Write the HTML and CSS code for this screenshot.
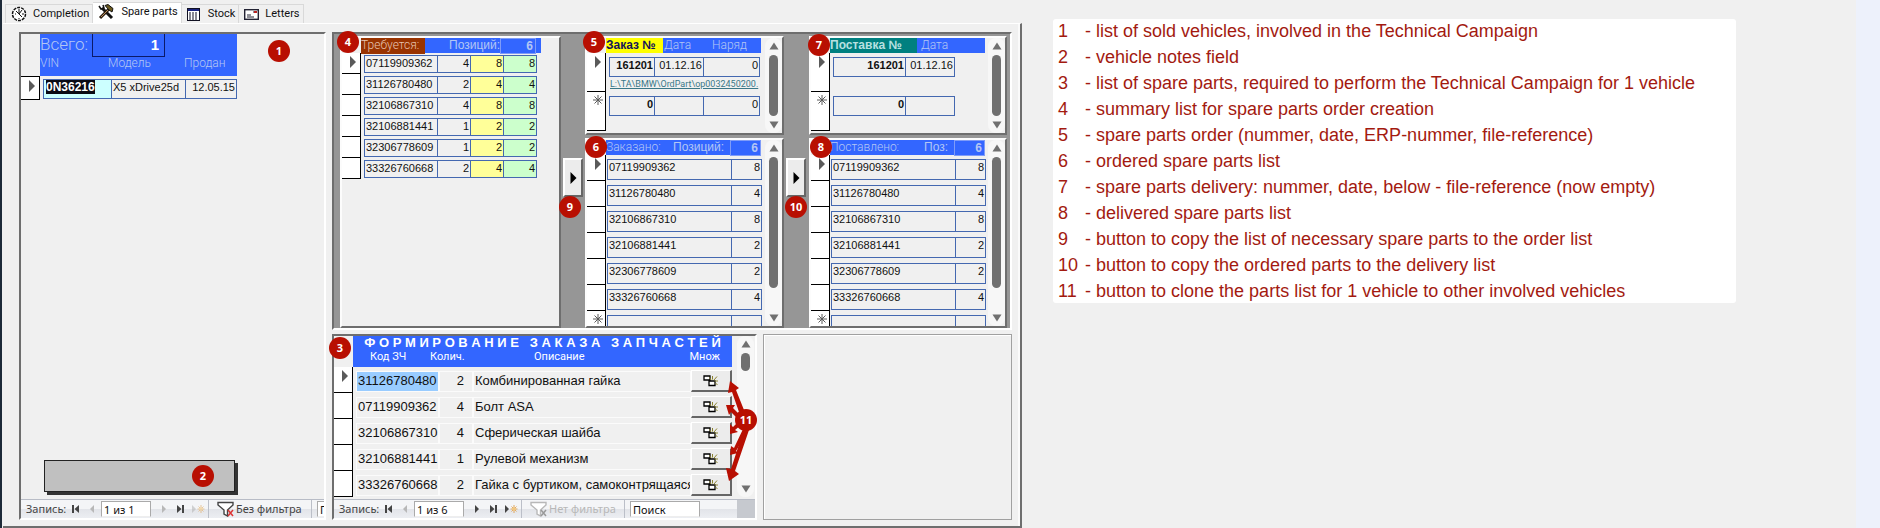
FILE: index.html
```html
<!DOCTYPE html>
<html lang="ru">
<head>
<meta charset="utf-8">
<title>Spare parts</title>
<link rel="stylesheet" href="styles.css">
</head>
<body>
<svg class="defs" aria-hidden="true">
  <symbol id="tri" viewBox="0 0 6 12"><path d="M0 0L6 6L0 12Z" fill="currentColor"/></symbol>
  <symbol id="star" viewBox="0 0 10 10"><path d="M5 0V10M0 5H10M1.500 1.500L8.500 8.500M8.500 1.500L1.500 8.500" stroke="currentColor" fill="none"/></symbol>
  <symbol id="up" viewBox="0 0 10 8"><path d="M5 0.500L9.500 7.500H0.500Z" fill="#707070"/></symbol>
  <symbol id="down" viewBox="0 0 10 8"><path d="M0.500 0.500H9.500L5 7.500Z" fill="#707070"/></symbol>
  <symbol id="first" viewBox="0 0 8 8"><path d="M0 0H2V8H0ZM7 0V8L2.500 4Z" fill="currentColor"/></symbol>
  <symbol id="last" viewBox="0 0 8 8"><path d="M6 0H8V8H6ZM1 0V8L5.500 4Z" fill="currentColor"/></symbol>
  <symbol id="prev" viewBox="0 0 8 8"><path d="M6 0V8L2 4Z" fill="currentColor"/></symbol>
  <symbol id="next" viewBox="0 0 8 8"><path d="M2 0V8L6 4Z" fill="currentColor"/></symbol>
  <symbol id="new" viewBox="0 0 13 8"><path d="M0 0V8L4 4Z" fill="currentColor"/><path d="M9 0V8M5.500 4H12.500M6.500 1.500L11.500 6.500M11.500 1.500L6.500 6.500" stroke="#e0a860"/><circle cx="9" cy="4" r="1.800" fill="#f3c77c"/></symbol>
  <symbol id="funnel" viewBox="0 0 18 16"><path d="M1 1.500H16V4L10.500 9V15L7 13V9L1 4Z" fill="#fff" stroke="currentColor" stroke-width="1.400"/></symbol>
  <symbol id="clone" viewBox="0 0 16 12"><path d="M1 1H7V5H1ZM6 6H12V10.500H6Z" fill="#fff" stroke="#000" stroke-width="1.300"/><path d="M8 5L6.500 2.500M9.500 4.500V1M11 5L14 1.500M11.500 6H15M12.500 8L14.500 10" stroke="#8c8430" fill="none"/></symbol>
</svg>

<main class="window">
  <nav class="tabs">
    <button class="tab" type="button"><svg width="16" height="16" viewBox="0 0 16 16"><circle cx="8" cy="8" r="6.500" fill="#fff" stroke="#111" stroke-width="1.500" stroke-dasharray="3 1"/><path d="M8 3V8L5 5M8 8L11 11M11 4L8 8M4 8H5M11 8H13M8 12V13" stroke="#111" fill="none"/></svg>Completion</button>
    <button class="tab tab-on" type="button"><svg width="17" height="16" viewBox="0 0 17 16"><path d="M4 4L14 14" stroke="#111" stroke-width="3"/><path d="M1 2L3 5L6 4L5 1" stroke="#111" fill="none" stroke-width="1.500"/><path d="M2 14L11 5" stroke="#2b1d10" stroke-width="3"/><path d="M3 13L11 5" stroke="#b58a5a"/><path d="M7 1.500L10 0.500L15 4.500L14 8L11 6Z" fill="#6b5a20" stroke="#111"/></svg>Spare parts</button>
    <button class="tab" type="button"><svg width="13" height="13" viewBox="0 0 13 13"><rect x="0.500" y="0.500" width="12" height="12" fill="#fff" stroke="#112"/><path d="M1 2H12" stroke="#1a237e" stroke-width="2"/><path d="M2 5H11M2 7H11M2 9H11M2 11H11" stroke="#112" stroke-dasharray="2 1"/></svg>Stock</button>
    <button class="tab" type="button"><svg width="15" height="11" viewBox="0 0 15 11"><rect x="0.700" y="0.700" width="13.600" height="9.600" fill="#fff" stroke="#223" stroke-width="1.400"/><path d="M9 3H12M3 6H7M3 8H10" stroke="#223"/><path d="M10 3H13" stroke="#b22" stroke-width="2"/></svg>Letters</button>
  </nav>

  <div class="page">
    <section class="vehicles sunken">
      <span class="badge b1">1</span>
      <table class="grid-veh">
        <thead>
          <tr class="veh-total"><th colspan="3">Всего: <output class="total">1</output></th></tr>
          <tr class="veh-cols"><th>VIN</th><th>Модель</th><th>Продан</th></tr>
        </thead>
        <tbody>
          <tr><th class="sel"><svg width="6" height="12"><use href="#tri"/></svg></th><td class="vin"><mark>0N36216</mark></td><td class="model">X5 xDrive25d</td><td class="num">12.05.15</td></tr>
        </tbody>
      </table>
      <div class="notes-wrap"><textarea class="notes" aria-label="Notes" readonly></textarea><span class="badge b2">2</span></div>
      <div class="recnav">
        <label class="rec-label" for="rec1">Запись:</label>
        <button type="button" aria-label="First"><svg width="8" height="8"><use href="#first"/></svg></button>
        <button type="button" aria-label="Previous" disabled><svg width="8" height="8"><use href="#prev"/></svg></button>
        <input class="rec-no" id="rec1" value="1 из 1">
        <button type="button" aria-label="Next" disabled><svg width="8" height="8"><use href="#next"/></svg></button>
        <button type="button" aria-label="Last"><svg width="8" height="8"><use href="#last"/></svg></button>
        <button class="new" type="button" aria-label="New" disabled><svg width="13" height="8"><use href="#new"/></svg></button>
        <button class="filter" type="button"><svg width="18" height="16"><use href="#funnel"/><path d="M11 9L16 15M16 9L11 15" stroke="#d33" stroke-width="1.500"/></svg>Без фильтра</button>
        <input class="search" aria-label="Search" value="Поиск">
      </div>
    </section>

    <div class="right">
      <section class="parts">
        <div class="raised required">
          <span class="badge b4">4</span>
          <div class="cap"><span class="brown">Требуется:</span><span class="cap-mid">Позиций:</span><output class="count">6</output></div>
          <table class="list req">
            <tr><th class="sel"><svg width="6" height="12"><use href="#tri"/></svg></th><td>07119909362</td><td>4</td><td class="yellow">8</td><td class="green">8</td></tr>
            <tr><th class="sel"></th><td>31126780480</td><td>2</td><td class="yellow">4</td><td class="green">4</td></tr>
            <tr><th class="sel"></th><td>32106867310</td><td>4</td><td class="yellow">8</td><td class="green">8</td></tr>
            <tr><th class="sel"></th><td>32106881441</td><td>1</td><td class="yellow">2</td><td class="green">2</td></tr>
            <tr><th class="sel"></th><td>32306778609</td><td>1</td><td class="yellow">2</td><td class="green">2</td></tr>
            <tr><th class="sel"></th><td>33326760668</td><td>2</td><td class="yellow">4</td><td class="green">4</td></tr>
          </table>
        </div>

        <div class="mover"><button type="button" aria-label="Copy to order"><svg width="7" height="12"><use href="#tri"/></svg></button><span class="badge b9">9</span></div>

        <div class="stack">
          <div class="raised with-scroll">
            <span class="badge b5">5</span>
            <div>
              <div class="cap cap-order"><span class="yellow-cap">Заказ №</span><span>Дата</span><span>Наряд</span></div>
              <table class="list order">
                <tr><th class="sel"><svg width="6" height="12"><use href="#tri"/></svg></th><td class="strong">161201</td><td>01.12.16</td><td>0</td><td class="file"><a href="#file">L:\TA\BMW\OrdPart\op0032450200.</a></td></tr>
                <tr><th class="sel"><svg width="10" height="10"><use href="#star"/></svg></th><td class="strong">0</td><td></td><td>0</td></tr>
              </table>
            </div>
            <div class="scroll"><svg width="10" height="8"><use href="#up"/></svg><i class="thumb"></i><svg width="10" height="8"><use href="#down"/></svg></div>
          </div>
          <div class="raised with-scroll">
            <span class="badge b6">6</span>
            <div>
              <div class="cap cap-list"><span>Заказано:</span><span class="cap-mid">Позиций:</span><output class="count">6</output></div>
              <table class="list items">
                <tr><th class="sel"><svg width="6" height="12"><use href="#tri"/></svg></th><td>07119909362</td><td>8</td></tr>
                <tr><th class="sel"></th><td>31126780480</td><td>4</td></tr>
                <tr><th class="sel"></th><td>32106867310</td><td>8</td></tr>
                <tr><th class="sel"></th><td>32106881441</td><td>2</td></tr>
                <tr><th class="sel"></th><td>32306778609</td><td>2</td></tr>
                <tr><th class="sel"></th><td>33326760668</td><td>4</td></tr>
                <tr class="cut"><th class="sel"><svg width="10" height="10"><use href="#star"/></svg></th><td></td><td></td></tr>
              </table>
            </div>
            <div class="scroll"><svg width="10" height="8"><use href="#up"/></svg><i class="thumb long"></i><svg width="10" height="8"><use href="#down"/></svg></div>
          </div>
        </div>

        <div class="mover"><button type="button" aria-label="Copy to delivery"><svg width="7" height="12"><use href="#tri"/></svg></button><span class="badge b10">10</span></div>

        <div class="stack">
          <div class="raised with-scroll">
            <span class="badge b7">7</span>
            <div>
              <div class="cap cap-delivery"><span class="teal">Поставка №</span><span>Дата</span></div>
              <table class="list delivery">
                <tr><th class="sel"><svg width="6" height="12"><use href="#tri"/></svg></th><td class="strong">161201</td><td>01.12.16</td></tr>
                <tr><th class="sel"><svg width="10" height="10"><use href="#star"/></svg></th><td class="strong">0</td><td></td></tr>
              </table>
            </div>
            <div class="scroll"><svg width="10" height="8"><use href="#up"/></svg><i class="thumb"></i><svg width="10" height="8"><use href="#down"/></svg></div>
          </div>
          <div class="raised with-scroll">
            <span class="badge b8">8</span>
            <div>
              <div class="cap cap-list"><span>Поставлено:</span><span class="cap-mid">Поз:</span><output class="count">6</output></div>
              <table class="list items">
                <tr><th class="sel"><svg width="6" height="12"><use href="#tri"/></svg></th><td>07119909362</td><td>8</td></tr>
                <tr><th class="sel"></th><td>31126780480</td><td>4</td></tr>
                <tr><th class="sel"></th><td>32106867310</td><td>8</td></tr>
                <tr><th class="sel"></th><td>32106881441</td><td>2</td></tr>
                <tr><th class="sel"></th><td>32306778609</td><td>2</td></tr>
                <tr><th class="sel"></th><td>33326760668</td><td>4</td></tr>
                <tr class="cut"><th class="sel"><svg width="10" height="10"><use href="#star"/></svg></th><td></td><td></td></tr>
              </table>
            </div>
            <div class="scroll"><svg width="10" height="8"><use href="#up"/></svg><i class="thumb long"></i><svg width="10" height="8"><use href="#down"/></svg></div>
          </div>
        </div>
      </section>

      <div class="bottom">
        <section class="builder sunken">
          <span class="badge b3">3</span>
          <div class="builder-main">
            <table class="build">
              <thead>
                <tr class="build-title"><th colspan="4">Ф О Р М И Р О В А Н И Е &nbsp; З А К А З А &nbsp; З А П Ч А С Т Е Й</th></tr>
                <tr class="build-cols"><th>Код ЗЧ</th><th>Колич.</th><th>Описание</th><th>Множ</th></tr>
              </thead>
              <tbody>
                <tr><th class="sel"><svg width="6" height="12"><use href="#tri"/></svg></th><td class="picked">31126780480</td><td class="qty">2</td><td>Комбинированная гайка</td><td class="act"><button type="button" aria-label="Clone"><svg width="16" height="12"><use href="#clone"/></svg></button></td></tr>
                <tr><th class="sel"></th><td>07119909362</td><td class="qty">4</td><td>Болт ASA</td><td class="act"><button type="button" aria-label="Clone"><svg width="16" height="12"><use href="#clone"/></svg></button></td></tr>
                <tr><th class="sel"></th><td>32106867310</td><td class="qty">4</td><td>Сферическая шайба</td><td class="act"><button type="button" aria-label="Clone"><svg width="16" height="12"><use href="#clone"/></svg></button></td></tr>
                <tr><th class="sel"></th><td>32106881441</td><td class="qty">1</td><td>Рулевой механизм</td><td class="act"><button type="button" aria-label="Clone"><svg width="16" height="12"><use href="#clone"/></svg></button></td></tr>
                <tr><th class="sel"></th><td>33326760668</td><td class="qty">2</td><td>Гайка с буртиком, самоконтрящаяся</td><td class="act"><button type="button" aria-label="Clone"><svg width="16" height="12"><use href="#clone"/></svg></button></td></tr>
              </tbody>
            </table>
            <div class="scroll"><svg width="10" height="8"><use href="#up"/></svg><i class="thumb short"></i><svg width="10" height="8"><use href="#down"/></svg></div>
          </div>
          <svg class="arrows" width="34" height="104" viewBox="0 0 34 104" aria-hidden="true"><g fill="#b80f02"><path d="M4 0L13 7L10 9L18 29L13 31L6 11L2 12Z"/><path d="M0 24L9 24L7 27L14 34L11 37L5 31L3 34Z"/><path d="M4 53L4 43L7 46L13 40L15 44L9 49L12 51Z"/><path d="M4 74L5 65L8 67L18 46L23 48L10 70L12 72Z"/><path d="M3 100L0 87L5 88L18 48L23 49L9 90L13 93Z"/></g></svg>
          <span class="badge b11">11</span>
          <div class="recnav">
            <label class="rec-label" for="rec2">Запись:</label>
            <button type="button" aria-label="First"><svg width="8" height="8"><use href="#first"/></svg></button>
            <button type="button" aria-label="Previous" disabled><svg width="8" height="8"><use href="#prev"/></svg></button>
            <input class="rec-no" id="rec2" value="1 из 6">
            <button type="button" aria-label="Next"><svg width="8" height="8"><use href="#next"/></svg></button>
            <button type="button" aria-label="Last"><svg width="8" height="8"><use href="#last"/></svg></button>
            <button class="new" type="button" aria-label="New"><svg width="13" height="8"><use href="#new"/></svg></button>
            <button class="filter off" type="button" disabled><svg width="18" height="16"><use href="#funnel"/><path d="M11 9L16 15M16 9L11 15" stroke="#999" stroke-width="1.500"/></svg>Нет фильтра</button>
            <input class="search" aria-label="Search" value="Поиск">
            <i class="corner"></i>
          </div>
        </section>
        <section class="empty"></section>
      </div>
    </div>
  </div>
</main>

<aside class="side">
  <ul class="legend">
    <li><span>1</span>- list of sold vehicles, involved in the Technical Campaign</li>
    <li><span>2</span>- vehicle notes field</li>
    <li><span>3</span>- list of spare parts, required to perform the Technical Campaign for 1 vehicle</li>
    <li><span>4</span>- summary list for spare parts order creation</li>
    <li><span>5</span>- spare parts order (nummer, date, ERP-nummer, file-reference)</li>
    <li><span>6</span>- ordered spare parts list</li>
    <li><span>7</span>- spare parts delivery: nummer, date, below - file-reference (now empty)</li>
    <li><span>8</span>- delivered spare parts list</li>
    <li><span>9</span>- button to copy the list of necessary spare parts to the order list</li>
    <li><span>10</span>- button to copy the ordered parts to the delivery list</li>
    <li><span>11</span>- button to clone the parts list for 1 vehicle to other involved vehicles</li>
  </ul>
</aside>
<div class="strip"></div>
</body>
</html>
```
FILE: styles.css
```css
* { box-sizing: border-box; }

:root {
  --face: #f0f0f0;
  --blue: #3366ff;
  --pale: #b4c6f4;
  --line: #4468b0;
  --dark: #6e6e6e;
  --red: #b80f02;
  --ui: Roboto, sans-serif;
}

body {
  margin: 0;
  min-height: 100vh;
  display: grid;
  grid-template-columns: minmax(0, 1022fr) minmax(0, 834fr) 24px;
  background: var(--face);
  font: 11px/14px "Liberation Sans", sans-serif;
  color: #111;
}

button, input, textarea { font: inherit; color: inherit; }
button { padding: 0; border: 0; background: none; }
svg { display: block; flex: none; }
.defs { position: absolute; width: 0; height: 0; }
.strip { background: #edf1fb; }

/* window and tabs */
.window {
  display: flex;
  flex-direction: column;
  margin-bottom: 2px;
  padding-left: 1px;
  border-left: 2px solid #1d2a38;
}
.tabs { display: flex; align-items: flex-end; height: 23px; padding-left: 2px; }
.tab {
  display: flex;
  align-items: center;
  gap: 6px;
  height: 19px;
  padding: 0 3px 0 5px;
  border: 1px solid #d9d9d9;
  border-bottom: 0;
  border-left-width: 0;
  font: 11px/16px var(--ui);
}
.tab:nth-child(3) { gap: 8px; }
.tab:first-child { border-left-width: 1px; }
.tab-on { height: 21px; padding-bottom: 3px; background: #fff; }

.page {
  flex: 1;
  display: grid;
  grid-template-columns: minmax(0, 307fr) minmax(0, 680fr);
  gap: 6px;
  padding: 8px 8px 6px 16px;
  border: solid var(--dark);
  border-width: 1px 2px 2px 0;
  border-top-color: #fff;
  box-shadow: inset -2px 0 #fafafa;
}
.sunken {
  position: relative;
  border: 2px solid #fff;
  border-top-color: var(--dark);
  border-left-color: var(--dark);
}

.badge {
  position: absolute;
  z-index: 2;
  display: grid;
  place-items: center;
  width: 22px;
  height: 22px;
  border-radius: 50%;
  background: var(--red);
  color: #fff;
  font: bold 11px/14px "Noto Sans", sans-serif;
}
.b1 { left: 247px; top: 6px; }
.b2 { right: 21px; top: 5px; }
.b3 { left: -5px; top: 1px; }
.b4, .b5 { left: -5px; top: -7px; }
.b5 { left: -4px; }
.b6, .b7 { left: -2px; top: -4px; }
.b7 { left: -3px; }
.b8 { left: -1px; top: -4px; }
.b9, .b10 { left: -2px; top: 160px; }
.b10 { left: 1px; }
.b11 { left: 401px; top: 73px; }

/* record selector */
.sel {
  display: flex;
  justify-content: center;
  width: 19px;
  padding: 3px 0 0 3px;
  border: solid #000;
  border-width: 0 1px 1px 0;
  background: #fff;
  color: #5a5a5a;
}

/* vehicles */
.vehicles { display: flex; flex-direction: column; }
table, thead, tbody { display: block; }
th { font-weight: normal; text-align: left; padding: 0; }
td { padding: 0; }
.grid-veh thead { width: 197px; margin-left: 19px; background: var(--blue); color: var(--pale); font-family: var(--ui); }
.grid-veh thead th { font-weight: 300; }
.grid-veh tr { display: grid; }
.veh-total th { display: flex; gap: 4px; height: 23px; font-size: 17px; line-height: 20px; }
.total {
  width: 73px;
  padding-right: 5px;
  border: 1px solid #0a1a6a;
  border-top: 0;
  color: #fff;
  font: bold 15px/21px "Liberation Sans", sans-serif;
  text-align: right;
}
.grid-veh .veh-cols { grid-template-columns: 68px 76px 53px; height: 19px; font-size: 12px; line-height: 13px; }
.grid-veh tbody tr { grid-template-columns: 22px 68px 74px 51px; height: 24px; }
.grid-veh .sel { border-width: 1px 1px 1px 0; }
.grid-veh td {
  margin: 3px -1px 1px 0;
  padding: 0 2px;
  border: 1px solid var(--line);
  line-height: 14px;
  white-space: nowrap;
}
.grid-veh .model { padding-left: 1px; }
.grid-veh .num { padding: 0 1px; text-align: right; }
.grid-veh .vin { background: #ccffff; }
mark { background: #0a0a14; color: #fff; font-weight: bold; font-size: 12px; }
.notes-wrap { position: relative; width: 191px; margin: auto 0 7px 23px; }
.notes {
  display: block;
  width: 100%;
  height: 32px;
  border: 1px solid #222;
  background: #c0c0c0;
  box-shadow: 4px 4px 0 -1px #333, 3px 3px #333;
  resize: none;
}

/* record navigation */
.recnav {
  display: flex;
  align-items: center;
  height: 19px;
  overflow: hidden;
  border-top: 1px solid #b8bcc6;
  background: linear-gradient(#f4f5f7 0 50%, #e2e4e9 50%, #eceef2);
  color: #444;
  font: 11px/14px "Noto Sans", sans-serif;
}
.rec-label { width: 47px; padding-left: 5px; flex: none; }
.recnav button { width: 16px; flex: none; display: flex; justify-content: center; }
.recnav button:disabled { color: #b8b8b8; }
.recnav input { flex: none; height: 16px; padding: 0 2px; border: 1px solid #aaa; border-bottom-color: #eee; background: #fff; color: #111; }
.rec-no { width: 50px; margin: 0 5px 0 1px; }
.recnav .new { width: 20px; }
.recnav .new:disabled { opacity: .6; }
.recnav .filter { width: 104px; height: 18px; gap: 1px; align-items: center; justify-content: flex-start; padding-left: 8px; border: solid #bbbfc8; border-width: 0 1px; white-space: nowrap; }
.recnav .search { width: 70px; margin-left: 5px; }
.corner { width: 18px; height: 19px; margin-left: auto; background: #c6c9cf; }

/* ordering area */
.right { display: flex; flex-direction: column; gap: 4px; min-width: 0; }
.parts {
  flex: 1;
  display: grid;
  grid-template-columns: minmax(0, 221fr) 24px minmax(0, 199fr) 25px minmax(0, 198fr);
  padding: 2px 3px 0 6px;
  border: 2px solid var(--dark);
  border-right-color: #fff;
  border-bottom-color: #fff;
  background: #969696;
}
.raised {
  position: relative;
  border: 2px solid var(--dark);
  border-top-color: #fcfcfc;
  border-left-color: #fcfcfc;
  background: var(--face);
}
.stack { display: flex; flex-direction: column; gap: 3px; }
.stack .raised:last-child { flex: 1; }
.with-scroll { display: grid; grid-template-columns: minmax(0, 1fr) 17px; }
.mover { position: relative; padding: 122px 0 0 2px; }
.mover button {
  display: grid;
  place-items: center;
  width: 20px;
  height: 39px;
  border: 2px solid #666;
  border-top-color: #fff;
  border-left-color: #fff;
  background: #ececec;
  color: #000;
}

.cap {
  display: grid;
  height: 15px;
  margin-left: 19px;
  background: var(--blue);
  color: var(--pale);
  font: 300 12px/14px var(--ui);
  white-space: nowrap;
}
.required .cap { grid-template-columns: 64px 75px 36px 5px; width: 180px; }
.cap-mid { font: 12px/14px "Liberation Sans", sans-serif; text-align: right; }
.count { padding-right: 2px; border: 1px solid #7f9cf8; font: bold 12px/14px "Liberation Sans", sans-serif; text-align: right; }
.cap-order { grid-template-columns: 58px 48px 49px; width: 155px; }
.cap-delivery { grid-template-columns: 91px 64px; width: 155px; }
.cap-list { grid-template-columns: 64px 60px 31px; width: 155px; }
.cap-list .cap-mid { padding-right: 6px; }
.brown { background: #993300; color: #e8c4b0; }
.yellow-cap { width: 57px; background: #ffff00; color: #14145a; font: bold 12px/14px "Liberation Sans", sans-serif; }
.teal { width: 87px; background: #008080; color: #b8e0e0; font: bold 12px/14px "Liberation Sans", sans-serif; }

.list tr { display: grid; }
.list td {
  margin-right: -1px;
  padding: 0 1px;
  border: 1px solid var(--line);
  line-height: 14px;
  text-align: right;
  white-space: nowrap;
}
.req td:nth-child(2), .items td:nth-child(2) { text-align: left; }
.list .yellow { background: #ffff99; }
.list .green { background: #ccffcc; }
.list .strong { font-weight: bold; }
.req tr { grid-template-columns: 22px 73px 33px 33px 33px; height: 21px; }
.req td { margin-top: 2px; margin-bottom: 1px; }
.order tr { grid-template-columns: 22px 45px 49px 56px; }
.delivery tr { grid-template-columns: 22px 72px 49px; }
.order tr, .delivery tr { grid-template-rows: 24px 15px; }
.order .sel, .delivery .sel { grid-row: 1 / 3; }
.order td, .delivery td { margin-top: 4px; line-height: 15px; }
.order .file { grid-row: 2; grid-column: 2 / 5; margin: 0; padding: 0 0 0 1px; border: 0; font: 9px/15px var(--ui); text-align: left; }
.file a { color: #3a7888; }
.items tr { grid-template-columns: 20px 124px 30px; height: 26px; }
.items td { margin-top: 4px; margin-bottom: 1px; line-height: 15px; }
.items .cut { height: 15px; }
.cut td { margin-bottom: 0; border-bottom: 0; }
.cut .sel { border-bottom: 0; }

/* scrollbars */
.scroll {
  display: flex;
  flex-direction: column;
  align-items: center;
  gap: 5px;
  width: 17px;
  padding: 4px 0;
  border-radius: 8px;
  background: #f7f7f7;
}
.thumb { width: 9px; height: 61px; border-radius: 5px; background: #707070; }
.thumb.long { height: 131px; }
.thumb.short { height: 18px; }
.scroll svg:last-child { margin-top: auto; }

/* list builder */
.bottom { display: grid; grid-template-columns: minmax(0, 425fr) minmax(0, 249fr); gap: 6px; }
.builder-main { display: flex; justify-content: space-between; padding-bottom: 2px; }
.build { width: 398px; }
.build thead { margin-left: 19px; height: 31px; background: var(--blue); color: #fff; }
.build tr { display: grid; }
.build-title th { font: bold 13px/14px "Liberation Sans", sans-serif; text-align: center; white-space: nowrap; }
.build .build-cols { grid-template-columns: 77px 48px 186px 68px; }
.build-cols th { font: 11px/14px var(--ui); }
.build-cols th:first-child { padding-left: 17px; }
.build-cols th:nth-child(3) { padding-left: 56px; }
.build-cols th:last-child { padding-right: 12px; text-align: right; }
.build tbody tr { grid-template-columns: 22px 83px 34px 218px 41px; height: 26px; }
.build tbody td {
  margin: 4px 0 1px;
  padding: 0 1px;
  border: 1px solid #fbfbfb;
  overflow: hidden;
  font-size: 13px;
  line-height: 17px;
  white-space: nowrap;
}
.build tbody .qty { padding-right: 8px; text-align: right; }
.build .picked { background: #99ccff; }
.build tbody .act { margin: 3px 0 1px; padding: 0; border: 0; }
.act button {
  display: grid;
  place-items: center;
  width: 100%;
  height: 22px;
  border: 2px solid #666;
  border-top: 1px solid #fff;
  border-left: 1px solid #fff;
  background: #ececec;
}
.builder .scroll { margin-right: 1px; }
.arrows { position: absolute; left: 392px; top: 45px; z-index: 1; }
.empty { border: 1px solid #a0a0a0; box-shadow: inset 1px 1px #fff; }

/* legend */
.side { padding: 19px 0 0 31px; }
.legend {
  display: grid;
  gap: 2px;
  width: 85%;
  margin: 0;
  padding: 0 0 0 5px;
  border-radius: 3px;
  background: #fff;
  color: #a31a10;
  font: 18px/24px "Liberation Sans", sans-serif;
  list-style: none;
}
.legend li { display: flex; white-space: nowrap; }
.legend span { width: 27px; flex: none; }
```
